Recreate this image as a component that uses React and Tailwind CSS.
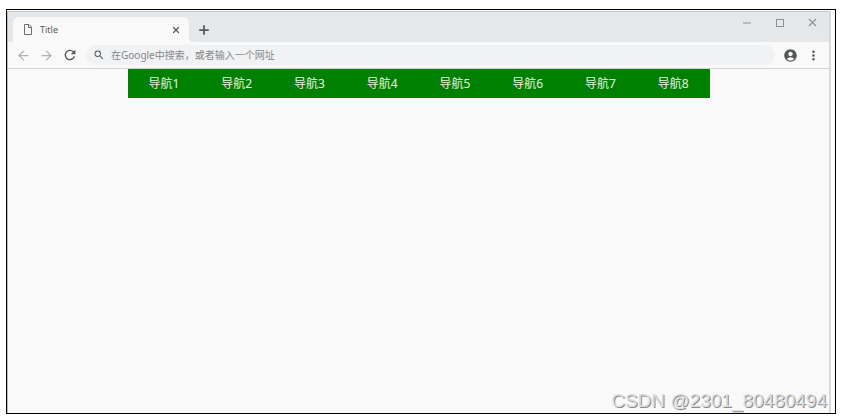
import React from 'react';
import { ArrowLeft, ArrowRight, Minus, Plus, X } from 'lucide-react';
import { MdAccountCircle, MdMoreVert, MdRefresh, MdSearch } from 'react-icons/md';

const navItems = ['导航1', '导航2', '导航3', '导航4', '导航5', '导航6', '导航7', '导航8'];

const TabStrip = () => (
    <div className="flex h-[30px] items-end bg-[#e5e8eb] pl-[5px]">
        <div className="flex h-[25px] w-[176px] items-center rounded-t-md bg-[#f9f9f9] pl-[10px] pr-2 text-[#5a5a5a]">
            <svg className="h-[11px] w-[10px]" viewBox="0 0 10 11" fill="none" stroke="#6b6e72" strokeWidth="1">
                <path d="M1.5 .5H6L8.5 3V10.5H1.5Z" />
                <path d="M5.5 .5V3.5H8.5" />
            </svg>
            <span className="ml-[7px] flex-1 text-[9px]">Title</span>
            <button type="button" aria-label="Close tab">
                <X className="h-[10px] w-[10px]" strokeWidth={3} />
            </button>
        </div>
        {/* flared foot of the active tab */}
        <svg className="h-[5px] w-[5px]" viewBox="0 0 5 5" fill="#f9f9f9">
            <path d="M0 0Q0 5 5 5H0Z" />
        </svg>
        <button type="button" aria-label="New tab" className="mb-1 ml-[3px] text-[#55585b]">
            <Plus className="h-4 w-[14px]" strokeWidth={3} />
        </button>
        <div className="mb-auto ml-auto flex items-center gap-[22px] pr-[10px] pt-1 text-[#8d9093]">
            <button type="button" aria-label="Minimize">
                <Minus className="h-3 w-3" strokeWidth={2} />
            </button>
            <button type="button" aria-label="Maximize">
                <svg className="h-[9px] w-[9px]" viewBox="0 0 9 9" fill="none" stroke="currentColor">
                    <rect x="1.5" y="1.5" width="7" height="7" />
                </svg>
            </button>
            <button type="button" aria-label="Close window">
                <X className="h-[13px] w-[13px]" strokeWidth={2} />
            </button>
        </div>
    </div>
);

const Toolbar = () => (
    <div className="flex h-[27px] items-center border-b border-[#d3d4d5] bg-[#f9f9f9] pl-2 pr-2 text-[#54575a]">
        <div className="flex items-center gap-2">
            <button type="button" aria-label="Back" className="text-[#b0b2b4]">
                <ArrowLeft className="h-[15px] w-[15px]" strokeWidth={2} />
            </button>
            <button type="button" aria-label="Forward" className="text-[#b0b2b4]">
                <ArrowRight className="h-[15px] w-[15px]" strokeWidth={2} />
            </button>
            <button type="button" aria-label="Reload">
                <MdRefresh className="h-4 w-4" />
            </button>
        </div>
        <label className="ml-2 flex h-5 flex-1 items-center rounded-full bg-[#f1f2f4] pl-[7px]">
            <MdSearch className="h-3 w-3" />
            <input
                type="text"
                aria-label="Address"
                placeholder="在Google中搜索，或者输入一个网址"
                className="ml-1.5 flex-1 bg-transparent text-[10px] outline-none placeholder:text-[#85888b]"
            />
        </label>
        <button type="button" aria-label="Profile" className="ml-2">
            <MdAccountCircle className="h-[15px] w-[15px]" />
        </button>
        <button type="button" aria-label="Menu" className="ml-2">
            <MdMoreVert className="h-[15px] w-[15px]" />
        </button>
    </div>
);

const NavBar = () => (
    <nav className="mx-auto w-full max-w-[582px] bg-[#008000]">
        <ul className="flex h-[29px] items-center text-xs text-[#e6f2e6]">
            {navItems.map((item) => (
                <li key={item} className="flex-1 text-center">
                    <a href="#">{item}</a>
                </li>
            ))}
        </ul>
    </nav>
);

const App = () => (
    <div className="flex min-h-screen bg-white pb-1.5 pl-1.5 pr-[5px] pt-[9px] font-['Noto_Sans','Noto_Sans_CJK_SC',sans-serif]">
        <div className="relative flex flex-1 border border-black pr-1 pt-px">
            <div className="flex flex-1 flex-col border-l border-r-2 border-t border-l-[#b9bcbe] border-r-[#d9d9da] border-t-[#c6c6c6] bg-[#f9f9f9]">
                <TabStrip />
                <Toolbar />
                <NavBar />
            </div>
            <p className="absolute bottom-0 right-2 font-['Liberation_Sans',Arial,sans-serif] text-[19px] leading-6 text-[#dedede] [text-shadow:1px_1px_0_#8a8a8a]">
                CSDN @2301_80480494
            </p>
        </div>
    </div>
);

export default App;
